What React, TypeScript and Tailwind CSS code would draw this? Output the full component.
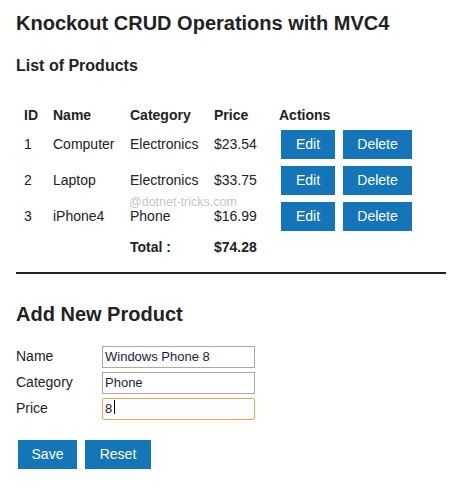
import React from "react";

const products = [
  { id: 1, name: "Computer", category: "Electronics", price: "$23.54" },
  { id: 2, name: "Laptop", category: "Electronics", price: "$33.75" },
  { id: 3, name: "iPhone4", category: "Phone", price: "$16.99" },
];

function BlueButton({ children, className = "" }: { children: React.ReactNode; className?: string }) {
  return (
    <button
      type="button"
      className={`h-[29px] bg-[#1475b9] text-[14px] text-white ${className}`}
    >
      {children}
    </button>
  );
}

function FormRow({ label, value, focused = false }: { label: string; value: string; focused?: boolean }) {
  return (
    <div className="flex h-[26px] items-center">
      <label className="w-[86px] text-[14px]">{label}</label>
      <div className="relative">
        <input
          readOnly
          value={value}
          className={`h-[22px] w-[153px] border px-[2px] text-[13px] text-[#1c1c3c] outline-none ${
            focused ? "rounded-[2px] border-[#e2ab4f]" : "border-[#a9a9a9]"
          }`}
        />
        {focused ? <span className="absolute left-[12px] top-[4px] h-[14px] w-px bg-black" /> : null}
      </div>
    </div>
  );
}

export default function App() {
  return (
    <div className="relative min-h-[491px] bg-white pl-4 pr-[9px] pt-[12px] font-['Liberation_Sans',Arial,sans-serif] text-[#222]">
      <h1 className="text-[20px] font-bold leading-[23px]">Knockout CRUD Operations with MVC4</h1>
      <h2 className="mt-[21px] text-[16px] font-bold leading-[19px]">List of Products</h2>

      <table className="mt-[29px] w-[420px] table-fixed border-collapse text-[14px]">
        <colgroup>
          <col className="w-[29px]" />
          <col className="w-[77px]" />
          <col className="w-[84px]" />
          <col className="w-[65px]" />
          <col />
        </colgroup>
        <thead>
          <tr className="h-[22px] font-bold">
            <th className="px-2 text-left">ID</th>
            <th className="px-2 text-left">Name</th>
            <th className="px-2 text-left">Category</th>
            <th className="px-2 text-left">Price</th>
            <th className="px-2 text-left">Actions</th>
          </tr>
        </thead>
        <tbody>
          {products.map((p) => (
            <tr key={p.id} className="h-[36px]">
              <td className="px-2">{p.id}</td>
              <td className="px-2">{p.name}</td>
              <td className="px-2">{p.category}</td>
              <td className="px-2">{p.price}</td>
              <td className="pl-[10px] pr-2">
                <div className="flex gap-2">
                  <BlueButton className="w-[54px]">Edit</BlueButton>
                  <BlueButton className="w-[69px]">Delete</BlueButton>
                </div>
              </td>
            </tr>
          ))}
          <tr className="h-[26px] font-bold">
            <td />
            <td />
            <td className="px-2">Total :</td>
            <td className="px-2">$74.28</td>
            <td />
          </tr>
        </tbody>
      </table>

      <span className="absolute left-[129px] top-[196px] text-[12.5px] leading-[13px] text-[#c6c6c6]">@dotnet-tricks.com</span>

      <div className="mt-[12px] h-[2px] bg-[#222]" />

      <h2 className="mt-[29px] text-[20px] font-bold leading-[23px]">Add New Product</h2>

      <div className="mt-[17px] flex flex-col">
        <FormRow label="Name" value="Windows Phone 8" />
        <FormRow label="Category" value="Phone" />
        <FormRow label="Price" value="8" focused />
      </div>

      <div className="mt-[19px] flex gap-2 pl-[2px]">
        <BlueButton className="w-[59px]">Save</BlueButton>
        <BlueButton className="w-[66px]">Reset</BlueButton>
      </div>
    </div>
  );
}
